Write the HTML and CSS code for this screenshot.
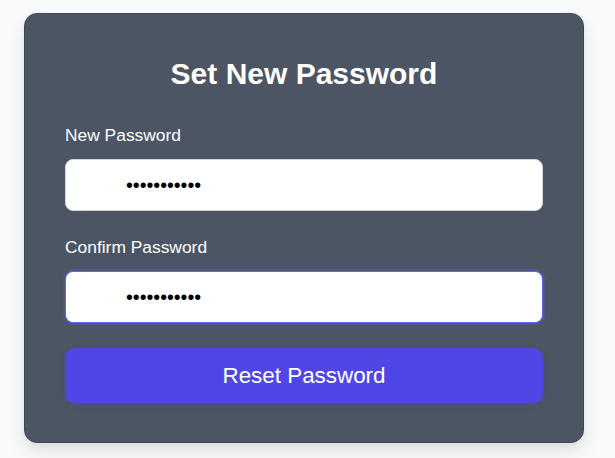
FILE: index.html
```html
<!DOCTYPE html>
<html lang="en">
<head>
<meta charset="utf-8">
<title>Set New Password</title>
<link rel="stylesheet" href="styles.css">
</head>
<body>
<main class="page">
  <form class="card">
    <h2 class="title">Set New Password</h2>
    <div class="field">
      <label class="label" for="pw">New Password</label>
      <input class="input" id="pw" type="password" value="12345678901">
    </div>
    <div class="field">
      <label class="label" for="pw2">Confirm Password</label>
      <input class="input input-focus" id="pw2" type="password" value="12345678901">
    </div>
    <button class="button" type="button">Reset Password</button>
  </form>
</main>
</body>
</html>
```

FILE: styles.css
```css
* { box-sizing: border-box; }
html, body { margin: 0; padding: 0; }
body {
  background: #f9fafb;
  font-family: "Liberation Sans", Arial, sans-serif;
  width: 615px;
  height: 458px;
  overflow: hidden;
}
.page {
  padding: 13px 0 0 24px;
}
.card {
  width: 560px;
  height: 430px;
  background: #4b5563;
  border: 1px solid #3f4753;
  border-radius: 13px;
  padding: 44px 40px 39px;
  box-shadow: 0 10px 20px rgba(0,0,0,0.08), 0 4px 8px rgba(0,0,0,0.05);
  display: flex;
  flex-direction: column;
}
.title {
  margin: 0 0 35px;
  font-size: 30px;
  line-height: 32px;
  font-weight: bold;
  color: #ffffff;
  text-align: center;
}
.field {
  display: flex;
  flex-direction: column;
  margin-bottom: 26px;
}
.field + .field { margin-bottom: 25px; }
.label {
  font-size: 17.4px;
  line-height: 20px;
  color: #ffffff;
  margin-bottom: 14px;
}
.input {
  width: 478px;
  height: 52px;
  border: 1px solid #d1d5db;
  border-radius: 8px;
  background: #ffffff;
  padding: 0 12px 0 60px;
  font-family: "Liberation Sans", Arial, sans-serif;
  font-size: 19.5px;
  color: #000000;
  outline: none;
}
.input-focus {
  border-color: #6366f1;
  box-shadow: 0 0 0 2px rgba(99,102,241,0.22);
}
.button {
  width: 478px;
  height: 55px;
  border: none;
  border-radius: 10px;
  background: #4f46e5;
  color: #ffffff;
  font-family: "Liberation Sans", Arial, sans-serif;
  font-size: 22.4px;
  display: flex;
  align-items: center;
  justify-content: center;
  box-shadow: 0 3px 6px rgba(79,70,229,0.2);
  cursor: pointer;
}
```
